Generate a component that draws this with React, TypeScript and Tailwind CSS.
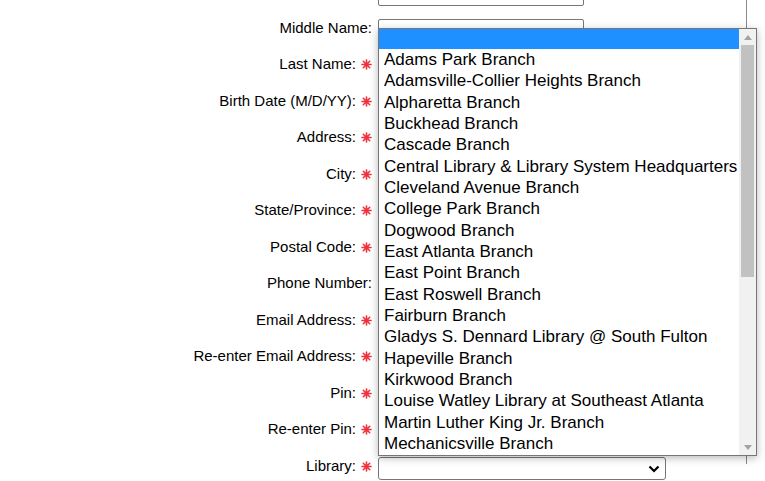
const fields = [
  { label: '', required: false, kind: 'input' },
  { label: 'Middle Name:', required: false, kind: 'input' },
  { label: 'Last Name:', required: true, kind: 'input' },
  { label: 'Birth Date (M/D/YY):', required: true, kind: 'input' },
  { label: 'Address:', required: true, kind: 'input' },
  { label: 'City:', required: true, kind: 'input' },
  { label: 'State/Province:', required: true, kind: 'input' },
  { label: 'Postal Code:', required: true, kind: 'input' },
  { label: 'Phone Number:', required: false, kind: 'input' },
  { label: 'Email Address:', required: true, kind: 'input' },
  { label: 'Re-enter Email Address:', required: true, kind: 'input' },
  { label: 'Pin:', required: true, kind: 'input' },
  { label: 'Re-enter Pin:', required: true, kind: 'input' },
  { label: 'Library:', required: true, kind: 'select' },
];

const branches = [
  'Adams Park Branch',
  'Adamsville-Collier Heights Branch',
  'Alpharetta Branch',
  'Buckhead Branch',
  'Cascade Branch',
  'Central Library & Library System Headquarters',
  'Cleveland Avenue Branch',
  'College Park Branch',
  'Dogwood Branch',
  'East Atlanta Branch',
  'East Point Branch',
  'East Roswell Branch',
  'Fairburn Branch',
  'Gladys S. Dennard Library @ South Fulton',
  'Hapeville Branch',
  'Kirkwood Branch',
  'Louise Watley Library at Southeast Atlanta',
  'Martin Luther King Jr. Branch',
  'Mechanicsville Branch',
];

const Asterisk = () => (
  <svg width="11" height="11" viewBox="0 0 11 11" className="ml-[5px] shrink-0">
    <g stroke="#f0323c" strokeWidth="1.6" strokeLinecap="round">
      <line x1="5.5" y1="1" x2="5.5" y2="10" />
      <line x1="1" y1="5.5" x2="10" y2="5.5" />
      <line x1="2.3" y1="2.3" x2="8.7" y2="8.7" />
      <line x1="8.7" y1="2.3" x2="2.3" y2="8.7" />
    </g>
    <circle cx="5.5" cy="5.5" r="2.2" fill="#f0323c" />
  </svg>
);

const Row = ({ label, required, kind }: { label: string; required: boolean; kind: string }) => (
  <div className="flex items-start h-[36.5px]">
    <div className="w-[372px] h-[17px] flex items-center justify-end pt-[1px]">
      {label && <span>{label}</span>}
      {required && <Asterisk />}
    </div>
    {kind === 'select' ? (
      <div className="ml-[6px] w-[288px] h-[23px] border border-[#767676] rounded-[3px] bg-white flex items-center justify-end pr-[4px]">
        <svg width="14" height="10" viewBox="0 0 14 10">
          <path d="M2.5 2.5 L7 7 L11.5 2.5" fill="none" stroke="#000" strokeWidth="2.2" />
        </svg>
      </div>
    ) : (
      <div className="ml-[6px] w-[206px] h-[23px] border border-[#767676] rounded-[2px] bg-white" />
    )}
  </div>
);

export default function App() {
  return (
    <div
      className="relative w-[765px] h-[481px] overflow-hidden bg-white text-black text-[15px]"
      style={{ fontFamily: '"Liberation Sans", Arial, sans-serif' }}
    >
      <div className="w-[747px] h-[481px] border-r border-[#8a8a8a]">
        <div className="mt-[-17.5px]">
          {fields.map((f, i) => (
            <Row key={i} {...f} />
          ))}
        </div>
      </div>

      <div className="absolute left-[378px] top-[28px] w-[379px] h-[428px] border border-[#767676] bg-white shadow-[0_2px_8px_rgba(0,0,0,0.28)] flex">
        <div className="w-[360px] overflow-hidden text-[17px]">
          <div className="h-[20px] bg-[#1e90ff]" />
          {branches.map((b) => (
            <div key={b} className="h-[21.33px] leading-[21.33px] pl-[5px] whitespace-nowrap">
              {b}
            </div>
          ))}
        </div>
        <div className="w-[17px] bg-[#f1f1f1] flex flex-col">
          <div className="h-[16px] flex items-center justify-center">
            <svg width="8" height="5" viewBox="0 0 8 5">
              <path d="M0 5 L4 0 L8 5 Z" fill="#a3a3a3" />
            </svg>
          </div>
          <div className="mx-[2px] h-[232px] bg-[#c1c1c1]" />
          <div className="flex-1" />
          <div className="h-[16px] flex items-center justify-center">
            <svg width="8" height="5" viewBox="0 0 8 5">
              <path d="M0 0 L8 0 L4 5 Z" fill="#a3a3a3" />
            </svg>
          </div>
        </div>
      </div>
    </div>
  );
}
